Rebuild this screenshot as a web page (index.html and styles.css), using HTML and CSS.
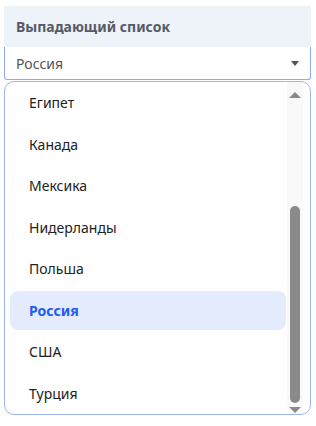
FILE: index.html
```html
<!DOCTYPE html>
<html lang="ru">
<head>
    <meta charset="UTF-8">
    <meta name="viewport" content="width=device-width, initial-scale=1.0">
    <title>Выпадающий список</title>
    <link rel="stylesheet" href="styles.css">
</head>
<body>

<div class="field">
    <div class="label">Выпадающий список</div>
    <div class="select">
        <span>Россия</span>
        <span class="caret"></span>
    </div>
</div>

<div class="list">
    <ul class="options">
        <li>Египет</li>
        <li>Канада</li>
        <li>Мексика</li>
        <li>Нидерланды</li>
        <li>Польша</li>
        <li class="active">Россия</li>
        <li>США</li>
        <li>Турция</li>
    </ul>
    <div class="scroll">
        <span class="arrow up"></span>
        <div class="track"><div class="thumb"></div></div>
        <span class="arrow down"></span>
    </div>
</div>

</body>
</html>
```

FILE: styles.css
```css
body{
    margin: 0;
    padding: 6px 5px 0 4px;
    background-color: white;
    font-family: "Noto Sans", "Open Sans", sans-serif;
    font-size: 14px;
    color: #222;
}
.field{
    width: 307px;
}
.label{
    background-color: #eef2f9;
    height: 41px;
    line-height: 42px;
    padding-left: 12px;
    font-weight: bold;
    color: #555b66;
    box-sizing: border-box;
}
.select{
    height: 33px;
    border: 1px solid #8fa9f2;
    border-top: none;
    border-radius: 0 0 3px 3px;
    display: flex;
    align-items: center;
    justify-content: space-between;
    padding: 0 11px 0 11px;
    color: #555;
    box-sizing: border-box;
}
.caret{
    width: 0;
    height: 0;
    border-left: 4px solid transparent;
    border-right: 4px solid transparent;
    border-top: 5px solid #555;
    margin-top: 1px;
}
.list{
    margin-top: 1px;
    width: 307px;
    height: 334px;
    border: 1px solid #9db4f3;
    border-radius: 10px;
    box-sizing: border-box;
    display: flex;
    overflow: hidden;
}
.options{
    list-style: none;
    margin: 0;
    padding: 0 0 0 5px;
    flex: 1;
    display: flex;
    flex-direction: column;
}
.options li{
    flex: 1;
    display: flex;
    align-items: center;
    padding-left: 19px;
    margin: 1px 0;
    border-radius: 8px;
}
.options .active{
    background-color: #e4ebfc;
    color: #1a5cf5;
    font-weight: bold;
}
.scroll{
    width: 16px;
    margin-left: 1px;
    margin-right: 7px;
    background-color: #f9f9f9;
    display: flex;
    flex-direction: column;
    align-items: center;
}
.track{
    flex: 1;
    width: 10px;
    display: flex;
    flex-direction: column;
    justify-content: flex-end;
    padding-bottom: 2px;
}
.thumb{
    height: 197px;
    background-color: #8a8a8a;
    border-radius: 5px;
}
.arrow{
    width: 0;
    height: 0;
    border-left: 6px solid transparent;
    border-right: 6px solid transparent;
}
.up{
    border-bottom: 6px solid #8a8a8a;
    margin: 10px 0 4px;
}
.down{
    border-top: 6px solid #8a8a8a;
    margin: 2px 0 1px;
}
```
